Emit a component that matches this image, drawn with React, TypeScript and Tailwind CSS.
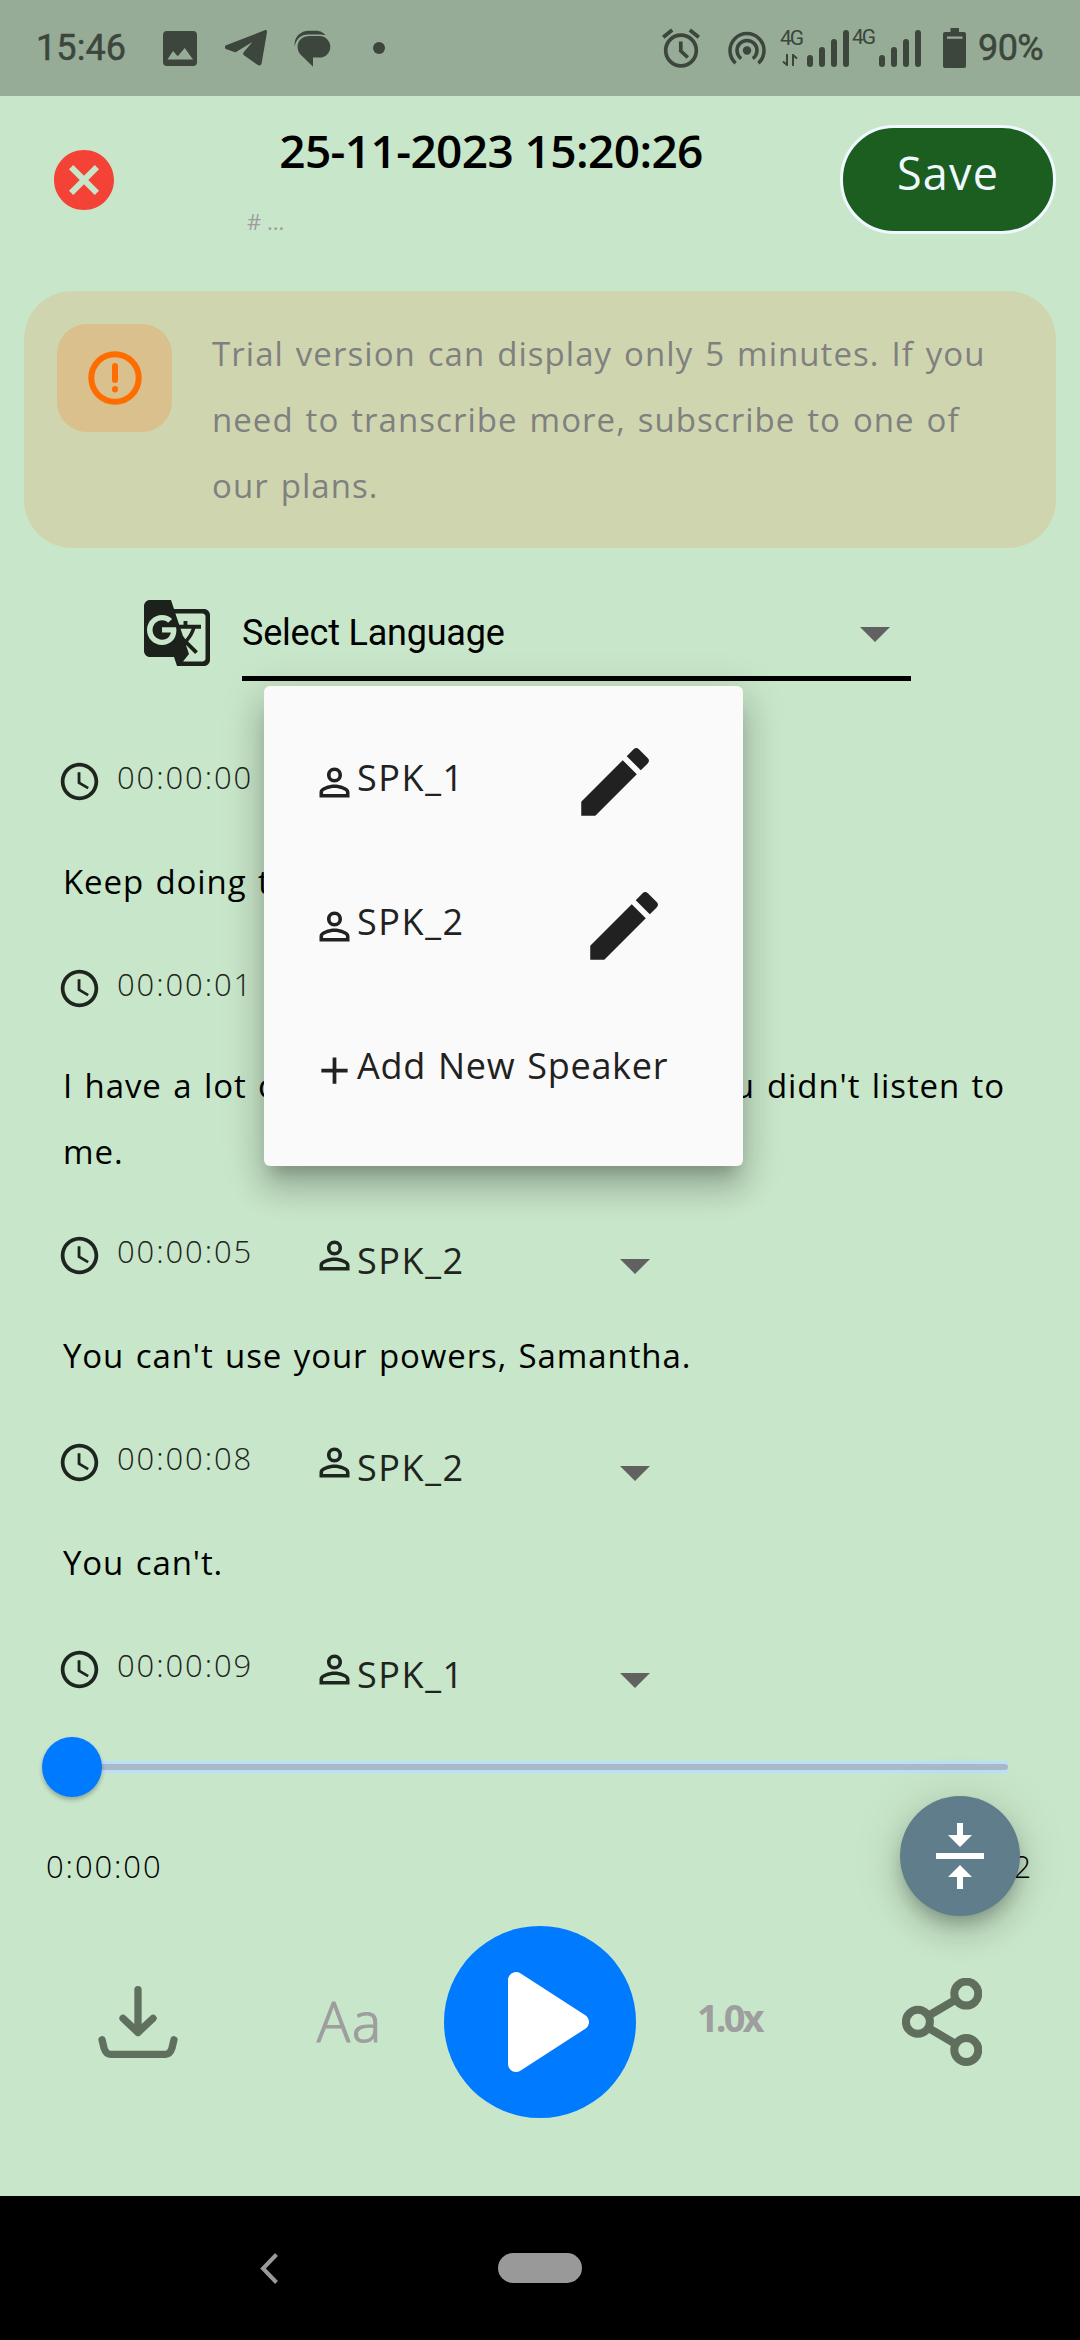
import type { ReactNode } from "react";
import {
  MdAccessTime,
  MdAdd,
  MdArrowDropDown,
  MdCancel,
  MdEdit,
  MdGTranslate,
  MdPersonOutline,
  MdVerticalAlignCenter,
} from "react-icons/md";

function SignalBars() {
  return (
    <div className="flex items-end gap-[6px]">
      <i className="h-3 w-[6px] rounded-[3px] bg-[#3c463c]" />
      <i className="h-5 w-[6px] rounded-[3px] bg-[#3c463c]" />
      <i className="h-7 w-[6px] rounded-[3px] bg-[#3c463c]" />
      <i className="h-[37px] w-[6px] rounded-[3px] bg-[#3c463c]" />
    </div>
  );
}

function StatusBar() {
  return (
    <header className="flex h-24 shrink-0 items-center bg-[#96ac96] font-[Roboto,sans-serif] text-[#3c463c]">
      <span className="ml-9 w-[127px] text-[36px] leading-none tracking-[0.1px] [-webkit-text-stroke:0.5px_#3c463c]">15:46</span>
      <svg className="h-[35px] w-[34px]" viewBox="0 0 34 35" fill="currentColor">
        <path
          fillRule="evenodd"
          d="M4 0h26a4 4 0 0 1 4 4v27a4 4 0 0 1-4 4H4a4 4 0 0 1-4-4V4a4 4 0 0 1 4-4zM4.500 28.500H30L21.700 17l-6.900 8.300-4.800-5.300z"
        />
      </svg>
      <svg className="ml-7 h-[38px] w-[42px]" viewBox="0 0 42 38" fill="currentColor" stroke="currentColor" strokeWidth="2" strokeLinejoin="round">
        <path d="M40.500 2 1.500 17.200c-1 .6-.8 1.700.2 2.100l8.800 2.900 18.800-11.600c.9-.4 1.300.1.800.7L19.600 23.600c-.6.800-.5 1.600.3 2.200L33 35c1.300.8 2.300.5 2.700-1.100L41 3.200c.1-.8 0-1.300-.5-1.200z" />
      </svg>
      <svg className="ml-[27px] h-[37px] w-[37px]" viewBox="0 0 37 37" fill="currentColor">
        <path d="M15.500 6H25.500a10.700 10.700 0 0 1 0 21.600H19V36.800L7 25C.500 18 3.500 6.300 15.500 6z" />
        <path d="M31.500 5.200C28.500 1.500 25 .8 21.500.8H15C5.500.8-.5 8.500.800 16.200 2.200 8.600 7.200 4.700 14 4.500h12c2 0 3.500.2 5.500.7z" />
      </svg>
      <i className="ml-[42px] size-3 rounded-full bg-[#3c463c]" />

      <svg className="ml-auto h-[40px] w-[38px]" viewBox="0 0 38 40" fill="none" stroke="currentColor" strokeWidth="3.700">
        <circle cx="19" cy="22.500" r="15.300" />
        <path d="M18.800 13.500v9.500l7 6.500" />
        <path d="M1.200 9.300 10.200 2M36.800 9.300 27.800 2" />
      </svg>
      <svg className="ml-7 h-[35px] w-[38px]" viewBox="0 0 38 35" fill="none" stroke="currentColor" strokeWidth="3.500">
        <circle cx="19" cy="19.500" r="4.200" fill="currentColor" stroke="none" />
        <path d="M13.200 27.600a10 10 0 1 1 11.600 0" />
        <path d="M7.600 32.200a17 17 0 1 1 22.800 0" />
      </svg>
      <div className="ml-[14px] flex w-[27px] flex-col items-start gap-[9px]">
        <span className="h-[15px] text-[21px] leading-[16px] tracking-[-2px]">4G</span>
        <svg className="ml-[2px] h-3 w-4" viewBox="0 0 16 12" fill="none" stroke="currentColor" strokeWidth="2">
          <path d="M5 0v11L1 7.500M11 12V1l4 3.500" />
        </svg>
      </div>
      <SignalBars />
      <div className="ml-[3px] flex h-[42px] w-[27px] items-start">
        <span className="text-[21px] leading-[20px] tracking-[-2px]">4G</span>
      </div>
      <SignalBars />
      <svg className="ml-[22px] h-[40px] w-[23px]" viewBox="0 0 23 40" fill="currentColor">
        <path
          fillRule="evenodd"
          d="M7.500 0h8.500v4h5a2 2 0 0 1 2 2v32a2 2 0 0 1-2 2H2a2 2 0 0 1-2-2V6a2 2 0 0 1 2-2h5.500zM4 8.500v2.300h15.500V8.500z"
        />
      </svg>
      <span className="mr-[36px] ml-3 w-[66px] text-[36px] leading-none tracking-[-0.6px] [-webkit-text-stroke:0.5px_#3c463c]">90%</span>
    </header>
  );
}

function TopBar() {
  return (
    <div className="flex h-[195px] shrink-0 items-start">
      <MdCancel className="mt-12 ml-12 size-[72px] text-[#f44336]" />
      <div className="mt-6 ml-[127px] w-[488px]">
        <h1 className="text-center text-[46px] leading-[60px] font-semibold tracking-[-0.6px] whitespace-nowrap">25-11-2023 15:20:26</h1>
        <p className="mt-[26px] text-[22px] leading-[30px] text-[#a09ba0]"># ...</p>
      </div>
      <button className="mt-[29px] ml-[105px] flex h-[109px] w-[216px] justify-center rounded-[54px] border-[3px] border-[#f0f8ff] bg-[#1b5e20] pt-[15px] text-[45px] leading-[60px] tracking-[1.2px] text-[#f0f8ff]">
        Save
      </button>
    </div>
  );
}

function TrialBanner() {
  return (
    <section className="mx-6 flex h-[257px] shrink-0 items-start rounded-[48px] bg-[#cfd6af]">
      <div className="mt-[33px] ml-[33px] flex h-[108px] w-[115px] items-center justify-center rounded-[30px] bg-[#d9c08d]">
        <svg className="size-[54px]" viewBox="0 0 54 54" fill="none" stroke="#ff6d00" strokeWidth="6" strokeLinecap="round">
          <circle cx="27" cy="27" r="23.700" />
          <path d="M27 15v14M27 38v.500" />
        </svg>
      </div>
      <p className="mt-[30px] ml-[40px] w-[795px] text-[33px] leading-[66px] tracking-[1.05px] text-[#808080] [word-spacing:2.300px]">
        Trial version can display only 5 minutes. If you need to transcribe more, subscribe to one of our plans.
      </p>
    </section>
  );
}

function LanguageSelect() {
  return (
    <div className="mt-[42px] ml-[141px] flex h-[91px] shrink-0">
      <MdGTranslate className="mt-[7px] size-[72px] text-[#1c211c]" />
      <div className="ml-[29px] flex w-[669px] items-center justify-between border-b-[5px] border-black font-[Roboto,sans-serif] text-[36px] leading-none tracking-[-0.2px] text-black">
        <span>Select Language</span>
        <MdArrowDropDown className="size-[72px] text-[#616161]" />
      </div>
    </div>
  );
}

function Entry({ time, speaker, children, body }: { time: string; speaker: string; children?: ReactNode; body: string }) {
  return (
    <article>
      <div className="ml-[57px] flex h-[63px] items-center text-[#1e241e]">
        <MdAccessTime className="size-[45px]" />
        <span className="mb-[9px] ml-[15px] w-[195px] text-[31px] leading-none font-[350] tracking-[1.9px]">{time}</span>
        <MdPersonOutline className="size-[45px]" />
        <span className="mt-[10px] w-[242px] text-[36px] leading-none tracking-[1.6px]">{speaker}</span>
        <MdArrowDropDown className="mt-[19px] size-[72px] text-[#616161]" />
      </div>
      <div className={body}>{children}</div>
    </article>
  );
}

const textStyle = "ml-[63px] text-[33px] leading-[66px] tracking-[0.9px] whitespace-nowrap text-black [word-spacing:2px]";

function Transcript() {
  return (
    <main className="h-[1035px] shrink-0 overflow-hidden pt-[69px]">
      <Entry time="00:00:00" speaker="SPK_1" body="h-36 pt-9">
        <p className={textStyle}>Keep doing that.</p>
      </Entry>
      <Entry time="00:00:01" speaker="SPK_1" body="h-51 pt-[33px]">
        <p className={textStyle}>
          <span className="inline-flex w-[704px] justify-between pr-[12px]">
            <span>I have a lot of powers,</span>
            <span>because you</span>
          </span>
          didn't listen to
          <br />
          me.
        </p>
      </Entry>
      <Entry time="00:00:05" speaker="SPK_2" body="h-36 pt-9">
        <p className={textStyle}>You can't use your powers, Samantha.</p>
      </Entry>
      <Entry time="00:00:08" speaker="SPK_2" body="h-36 pt-9">
        <p className={textStyle}>You can't.</p>
      </Entry>
      <Entry time="00:00:09" speaker="SPK_1" body="h-0" />
    </main>
  );
}

function SpeakerMenu() {
  return (
    <div className="absolute top-[686px] left-[264px] h-[480px] w-[479px] rounded-[6px] bg-[#fafafa] py-6 pl-12 text-[36px] leading-none tracking-[1.6px] text-[#212121] shadow-[0_15px_15px_-9px_rgba(0,0,0,0.2),0_24px_30px_3px_rgba(0,0,0,0.14),0_9px_42px_6px_rgba(0,0,0,0.12)]">
      <div className="flex h-36 items-center">
        <MdPersonOutline className="mt-px size-[45px]" />
        <span className="mb-[8px] w-[213px]">SPK_1</span>
        <MdEdit className="size-[90px]" />
      </div>
      <div className="flex h-36 items-center">
        <MdPersonOutline className="mt-px size-[45px]" />
        <span className="mb-[8px] w-[222px]">SPK_2</span>
        <MdEdit className="size-[90px]" />
      </div>
      <div className="flex h-36 items-center">
        <MdAdd className="size-[45px]" />
        <span className="mb-[8px] tracking-[0.7px] whitespace-nowrap [word-spacing:2px]">Add New Speaker</span>
      </div>
    </div>
  );
}

function Player() {
  return (
    <footer className="shrink-0">
      <div className="mt-[21px] ml-[42px] flex h-[60px] items-center">
        <div className="z-10 size-[60px] rounded-full bg-[#007aff] shadow-[0_3px_4px_rgba(0,0,0,0.25)]" />
        <div className="-ml-[30px] flex h-3 w-[936px] items-center bg-[#bbdefb]">
          <div className="h-[6px] w-full rounded-r-[3px] bg-[#a9b9c9]" />
        </div>
      </div>
      <div className="mt-[49px] flex justify-between pr-[47px] pl-[46px] text-[31px] leading-10 font-[350] tracking-[1.9px] text-black">
        <span>0:00:00</span>
        <span>0:00:12</span>
      </div>
      <div className="mt-[40px] flex h-[192px] items-center">
        <svg className="ml-[98px] h-[72px] w-20" viewBox="0 0 80 72" fill="none" stroke="#60705f" strokeWidth="7.300" strokeLinecap="round" strokeLinejoin="round">
          <path d="M40 3.700V44M25 32.300 40 46.500 55 32.300" />
          <path d="M4 53.700 6 62q2 6.300 6.500 6.300h55q4.500 0 6.500-6.300l2-8.300" />
        </svg>
        <span className="mb-1 ml-[139px] w-[127px] text-[55px] leading-none font-light tracking-[2px] text-[#9e9e9e] [-webkit-text-stroke:1.2px_#9e9e9e]">
          Aa
        </span>
        <div className="size-[192px] rounded-full bg-[#007aff]">
          <svg className="size-[192px]" viewBox="0 0 192 192" fill="#fff" stroke="#fff" strokeWidth="16" strokeLinejoin="round">
            <path d="M72 54v84l65-42z" />
          </svg>
        </div>
        <span className="mb-[10px] ml-[61px] w-[205px] text-[38px] leading-none font-bold tracking-[-2.900px] text-[#9e9e9e]">1.0x</span>
        <svg className="h-[88px] w-20" viewBox="0 0 80 88" fill="none" stroke="#5f6e5d" strokeWidth="8">
          <circle cx="64.300" cy="15.600" r="12" />
          <circle cx="15.900" cy="43.800" r="12" />
          <circle cx="64.300" cy="72" r="12" />
          <path d="M26 38 54 21.500M26 49.700 54 66.200" />
        </svg>
      </div>
    </footer>
  );
}

function NavBar() {
  return (
    <nav className="mt-auto flex h-36 shrink-0 items-center bg-black">
      <svg className="ml-[260px] h-[31px] w-[18px]" viewBox="0 0 18 31" fill="none" stroke="#999" strokeWidth="4">
        <path d="M16.500 1.500 3 15.500l13.500 14" />
      </svg>
      <i className="ml-[220px] h-[30px] w-[84px] rounded-full bg-[#999]" />
    </nav>
  );
}

export default function App() {
  return (
    <div className="relative flex h-[2340px] w-[1080px] flex-col overflow-hidden bg-[#c8e6c9] font-['Open_Sans',sans-serif] text-black">
      <StatusBar />
      <TopBar />
      <TrialBanner />
      <LanguageSelect />
      <Transcript />
      <Player />
      <NavBar />
      <SpeakerMenu />
      <button className="absolute top-[1796px] left-[900px] z-20 flex size-[120px] items-center justify-center rounded-full bg-[#607d8b] text-white shadow-[0_9px_15px_-3px_rgba(0,0,0,0.2),0_18px_30px_0_rgba(0,0,0,0.14),0_3px_54px_0_rgba(0,0,0,0.12)]">
        <MdVerticalAlignCenter className="size-[72px]" />
      </button>
    </div>
  );
}
